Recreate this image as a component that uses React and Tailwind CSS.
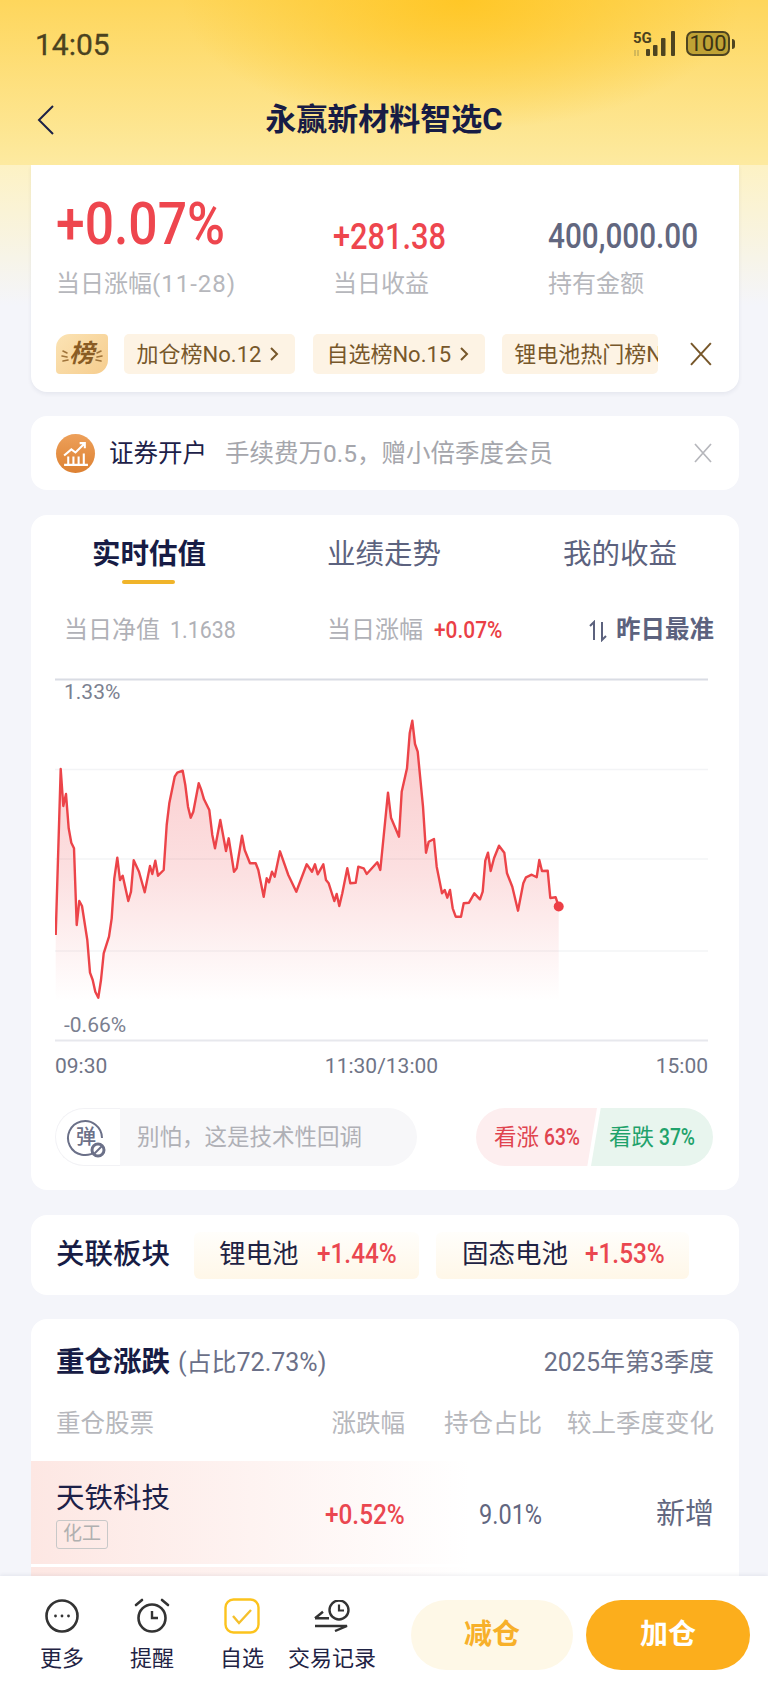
const pts3 = [[47,795],[62,297],[70,408],[78,372],[86,475],[94,518],[102,535],[110,765],[118,693],[126,708],[142,810],[150,908],[158,930],[166,965],[175,983],[183,930],[191,850],[207,800],[215,745],[223,625],[232,563],[240,630],[248,617],[265,693],[273,665],[281,571],[297,605],[314,667],[330,588],[337,612],[346,572],[354,617],[371,600],[380,465],[388,400],[404,320],[412,308],[428,302],[436,345],[444,410],[452,443],[460,425],[476,340],[484,360],[492,388],[508,420],[517,495],[525,535],[541,450],[558,543],[566,505],[582,605],[590,595],[606,497],[614,540],[630,580],[647,580],[655,600],[671,680],[680,625],[687,637],[696,605],[704,620],[720,544],[745,615],[769,665],[800,583],[816,605],[825,583],[833,613],[850,583],[858,630],[866,640],[883,693],[890,672],[898,708],[907,670],[922,595],[931,640],[947,638],[955,590],[971,595],[980,612],[1012,577],[1021,600]];
const pts4 = [[54,368],[63,443],[87,500],[95,365],[111,295],[119,190],[127,152],[135,222],[143,245],[159,410],[168,548],[176,515],[192,507],[200,590],[216,670],[224,660],[232,683],[240,660],[248,715],[257,740],[273,740],[281,700],[297,698],[313,670],[330,688],[338,665],[346,572],[354,548],[362,603],[372,565],[387,527],[403,548],[411,610],[427,650],[444,722],[460,640],[468,622],[485,614],[500,622],[508,570],[516,603],[533,602],[541,684],[557,682],[566,710]];
const line = [
  ...pts3.map(([x, y]) => [40 + x / 3, 670 + y / 3]),
  ...pts4.map(([x, y]) => [370 + x / 3, 670 + y / 3]),
].map(([x, y]) => `${x.toFixed(1)},${y.toFixed(1)}`).join(" ");
const lastX = (370 + 566 / 3).toFixed(1);
const area = `55.7,1001 ${line} ${lastX},1001`;

function Num({ cls, children }) {
  return <span className={`inline-block whitespace-nowrap ${cls}`}>{children}</span>;
}

function Chart() {
  return (
    <div className="relative h-[375px] w-[653px]">
      <svg viewBox="55 670 653 375" className="block h-[375px] w-[653px]">
        <defs>
          <linearGradient id="fillg" x1="0" y1="0" x2="0" y2="1">
            <stop offset="0" stopColor="#ee4b50" stopOpacity="0.3" />
            <stop offset="0.55" stopColor="#ee4b50" stopOpacity="0.17" />
            <stop offset="1" stopColor="#ee4b50" stopOpacity="0" />
          </linearGradient>
        </defs>
        <line x1="55" x2="708" y1="679.5" y2="679.5" stroke="#d9dce4" strokeWidth="2" />
        <line x1="55" x2="708" y1="769.5" y2="769.5" stroke="#f3f4f6" strokeWidth="1.5" />
        <line x1="55" x2="708" y1="859" y2="859" stroke="#f3f4f6" strokeWidth="1.5" />
        <line x1="55" x2="708" y1="951" y2="951" stroke="#f3f4f6" strokeWidth="1.5" />
        <line x1="55" x2="708" y1="1040.5" y2="1040.5" stroke="#e7e8ed" strokeWidth="2" />
        <polygon points={area} fill="url(#fillg)" />
        <polyline points={line} fill="none" stroke="#ec4449" strokeWidth="2.4" strokeLinejoin="round" />
        <circle cx={lastX} cy="906.5" r="5" fill="#ec3f46" />
      </svg>
      <span className="absolute left-[9px] top-[10px] text-[21px] leading-[24px] text-[#7b7f90]">1.33%</span>
      <span className="absolute left-[9px] top-[343px] text-[21px] leading-[24px] text-[#7b7f90]">-0.66%</span>
    </div>
  );
}

function Tag({ children, cls }) {
  return <div className={`flex h-[40px] items-center overflow-hidden rounded-[5px] bg-[#fdf3e4] text-[22px] text-[#77572a] ${cls}`}>{children}</div>;
}

function Chev() {
  return (
    <svg viewBox="0 0 10 16" className="ml-[8px] h-[16px] w-[10px]" fill="none" stroke="#77572a" strokeWidth="2"><path d="M2 2l6 6-6 6" /></svg>
  );
}

function NavIcon({ label, children }) {
  return (
    <div className="flex w-[90px] flex-col items-center">
      <div className="flex h-[44px] w-[44px] items-center justify-center">{children}</div>
      <span className="mt-[6px] text-[22px] leading-[30px] text-[#1f2344]">{label}</span>
    </div>
  );
}

export default function App() {
  return (
    <div className="flex h-[1695px] w-[768px] flex-col overflow-hidden bg-[#f4f5fa] [font-family:Roboto,'Noto_Sans_CJK_SC',sans-serif]">
      <header className="h-[165px] shrink-0 bg-[radial-gradient(ellipse_280px_130px_at_60%_0%,rgba(255,198,36,0.95),rgba(255,198,36,0)),linear-gradient(180deg,#fed65c,#fdeaa0)] px-[35px]">
        <div className="flex h-[100px] items-start justify-between pt-[27px]">
          <span className="text-[30px] leading-[36px] text-[#4b4220] [-webkit-text-stroke:0.3px_#4b4220]">14:05</span>
          <div className="mr-[-2px] mt-[4px] flex items-start">
            <div className="relative h-[26px] w-[46px]">
              <span className="absolute left-0 top-0 text-[15px] font-bold leading-[14px] text-[#4b4220]">5G</span>
              <svg viewBox="0 0 46 26" className="absolute left-0 top-0 h-[26px] w-[46px]" fill="#4e4420">
                <path d="M2 19v6M5 25v-6" stroke="#a99a55" strokeWidth="1" />
                <rect x="13" y="18" width="4" height="7" rx="1" />
                <rect x="20" y="14" width="4.5" height="11" rx="1" />
                <rect x="28" y="7" width="4.5" height="18" rx="1" />
                <rect x="38" y="0" width="4" height="25" rx="1" />
              </svg>
            </div>
            <div className="flex items-center">
              <div className="ml-[7px] flex h-[25px] w-[44px] items-center justify-center rounded-[7px] border-2 border-[#4e4420] bg-[#bfa235] text-[22px] leading-[22px] text-[#3c3414]">100</div>
              <div className="ml-[2px] h-[10px] w-[3px] rounded-r bg-[#4e4420]" />
            </div>
          </div>
        </div>
        <div className="relative flex h-[40px] items-center justify-center">
          <svg viewBox="0 0 18 32" className="absolute left-[2px] top-[4px] h-[32px] w-[18px]" fill="none" stroke="#1c2147" strokeWidth="2"><path d="M16 2L2 16l14 14" /></svg>
          <h1 className="text-[31px] font-bold leading-[40px] text-[#171c45]">永赢新材料智选C</h1>
        </div>
      </header>

      <main className="min-h-0 flex-1 overflow-hidden bg-[linear-gradient(180deg,#fdf2c4_0px,#f4f5fa_140px,#f4f5fa_100%)] pl-[31px] pr-[29px]">
        <section className="rounded-b-[16px] bg-white pb-[17px] pl-[25px] pr-[26px] shadow-[0_2px_4px_rgba(30,40,80,0.07)]">
          <div className="grid grid-cols-[277px_215px_1fr]">
            <div className="pt-[29px]">
              <Num cls="w-[168px] origin-left scale-x-[0.86] text-[60px] font-medium leading-[60px] text-[#ee464e]">+0.07%</Num>
              <div className="mt-[15px] text-[24px] leading-[30px] text-[#b6b7bc]">当日涨幅<span className="tracking-[1px]">(11-28)</span></div>
            </div>
            <div className="pt-[52px]">
              <Num cls="w-[112px] origin-left scale-x-[0.855] text-[36px] font-medium leading-[40px] text-[#ee464e]">+281.38</Num>
              <div className="mt-[12px] text-[24px] leading-[30px] text-[#b6b7bc]">当日收益</div>
            </div>
            <div className="pt-[52px]">
              <Num cls="w-[150px] origin-left scale-x-[0.85] text-[35px] font-medium leading-[40px] text-[#62677f]">400,000.00</Num>
              <div className="mt-[12px] text-[24px] leading-[30px] text-[#b6b7bc]">持有金额</div>
            </div>
          </div>
          <div className="mt-[34px] flex h-[42px] items-center">
            <div className="relative flex h-[40px] w-[52px] items-center justify-center rounded-bl-[4px] rounded-br-[14px] rounded-tl-[14px] rounded-tr-[4px] bg-[linear-gradient(135deg,#fbe3b4,#f6cd8e)]">
              <svg viewBox="0 0 52 40" className="absolute inset-0 h-[40px] w-[52px]" fill="none" stroke="#a0743a" strokeWidth="1.6" strokeLinecap="round">
                <path d="M7 17l4 2M6 22l5 1M7 27l5-1M45 17l-4 2M46 22l-5 1M45 27l-5-1" />
              </svg>
              <span className="relative text-[25px] font-bold italic leading-[30px] text-[#8a5c24]">榜</span>
            </div>
            <Tag cls="ml-[16px] w-[173px] pl-[13px]">加仓榜No.12<Chev /></Tag>
            <Tag cls="ml-[18px] w-[173px] pl-[13px]">自选榜No.15<Chev /></Tag>
            <Tag cls="ml-[17px] w-[157px] whitespace-nowrap pl-[12px]">锂电池热门榜No.3</Tag>
            <svg viewBox="0 0 24 24" className="ml-[31px] h-[24px] w-[24px]" fill="none" stroke="#77572a" strokeWidth="2"><path d="M2 1l20 22M22 1L2 23" /></svg>
          </div>
        </section>

        <section className="mt-[24px] flex h-[74px] items-center rounded-[16px] bg-white pl-[25px] pr-[26px]">
          <div className="flex h-[39px] w-[39px] items-center justify-center rounded-full bg-[linear-gradient(180deg,#eda05a,#dd8132)]">
            <svg viewBox="0 0 28 28" className="h-[29px] w-[29px]" fill="none" stroke="#fff" strokeWidth="2">
              <path d="M3 16l7-6 4 3 9-9M18 4h5v5" />
              <path d="M7 17v7M12 17v7M17 17v7M22 14v10M3 25h23" />
            </svg>
          </div>
          <span className="ml-[14px] pt-[1px] text-[24.5px] leading-[30px] text-[#1d2148]">证券开户</span>
          <span className="ml-[18px] pt-[1px] text-[24.5px] leading-[30px] text-[#a5a6ac]">手续费万0.5，赠小倍季度会员</span>
          <svg viewBox="0 0 20 20" className="ml-auto h-[20px] w-[20px]" fill="none" stroke="#b6b7bc" strokeWidth="1.7"><path d="M2 1l16 18M18 1L2 19" /></svg>
        </section>

        <section className="mt-[25px] h-[675px] rounded-[16px] bg-white px-[24px]">
          <div className="grid h-[75px] grid-cols-[235px_236px_1fr] text-[28.5px] leading-[36px] text-[#5c627e]">
            <div className="relative ml-[37px] w-[116px] pt-[22px] font-bold text-[#171c45]">
              实时估值
              <div className="absolute left-[30px] top-[65px] h-[4px] w-[53px] rounded-full bg-[#f0b42a]" />
            </div>
            <div className="ml-[37px] pt-[22px]">业绩走势</div>
            <div className="ml-[37px] pt-[22px]">我的收益</div>
          </div>
          <div className="relative flex h-[80px] items-start pt-[25px] text-[24px] leading-[30px]">
            <span className="ml-[9px] text-[#b0b1b7]">当日净值</span>
            <Num cls="ml-[10px] w-[65px] origin-left scale-x-[0.89] text-[#b0b1b7]">1.1638</Num>
            <span className="absolute left-[272px] top-[25px] text-[#b0b1b7]">当日涨幅</span>
            <Num cls="absolute left-[379px] top-[25px] origin-left scale-x-[0.87] font-medium text-[#ea3f46]">+0.07%</Num>
            <svg viewBox="0 0 20 22" className="ml-auto mr-[8px] mt-[5px] h-[22px] w-[20px]" fill="none" stroke="#5c627e" strokeWidth="2"><path d="M6 20V2L2 6M14 2v18l4-4" /></svg>
            <span className="mr-[1px] text-[24.5px] font-bold text-[#5c627e]">昨日最准</span>
          </div>
          <Chart />
          <div className="mt-[8px] flex justify-between pr-[7px] text-[21px] leading-[26px] text-[#6f7486]">
            <span>09:30</span>
            <span>11:30/13:00</span>
            <span>15:00</span>
          </div>
          <div className="mt-[29px] flex items-center">
            <div className="flex h-[58px] w-[362px] overflow-hidden rounded-[29px] bg-[#f7f7f9]">
              <div className="relative flex h-[58px] w-[65px] items-center justify-center rounded-l-[29px] border border-r-0 border-[#f2f2f5] bg-white">
                <svg viewBox="0 0 40 40" className="absolute left-[10px] top-[9px] h-[40px] w-[40px]" fill="none" stroke="#6b7088" strokeWidth="2">
                  <path d="M30 33A17 17 0 1 1 36 20" />
                  <circle cx="32" cy="32" r="6" stroke="#6b7088" strokeWidth="3" fill="#fff" />
                  <path d="M28 36l8-8" strokeWidth="2" />
                </svg>
                <span className="relative left-[-2px] text-[20px] font-medium leading-[24px] text-[#6b7088]">弹</span>
              </div>
              <span className="ml-[17px] self-center text-[22.5px] leading-[30px] text-[#afb0b6]">别怕，这是技术性回调</span>
            </div>
            <div className="relative ml-[59px] flex h-[58px] w-[237px] text-[22.5px] leading-[58px]">
              <div className="flex h-[58px] w-[121px] rounded-l-[29px] bg-[#fdeeef] pl-[18px] text-[#e0444f] [clip-path:polygon(0_0,100%_0,92%_100%,0_100%)]">
                看涨<Num cls="ml-[5px] origin-left scale-x-[0.8] text-[24px] font-medium">63%</Num>
              </div>
              <div className="ml-[-6px] flex h-[58px] w-[122px] rounded-r-[29px] bg-[#e8f5ee] pl-[18px] text-[#1fa26b] [clip-path:polygon(8%_0,100%_0,100%_100%,0_100%)]">
                看跌<Num cls="ml-[5px] origin-left scale-x-[0.8] text-[24px] font-medium">37%</Num>
              </div>
            </div>
          </div>
        </section>

        <section className="mt-[25px] flex h-[80px] items-center rounded-[16px] bg-white pl-[25px]">
          <span className="pb-[1px] text-[28.5px] font-medium leading-[36px] text-[#171c45]">关联板块</span>
          <div className="ml-[24px] flex h-[47px] w-[225px] items-center rounded-[6px] bg-[linear-gradient(180deg,#fffefb,#fff7e8)] pb-[2px] pl-[25px] text-[26.5px]">
            <span className="text-[#1f2344]">锂电池</span>
            <Num cls="ml-[18px] w-[79px] origin-left scale-x-[0.87] text-[28px] font-medium text-[#ea4750]">+1.44%</Num>
          </div>
          <div className="ml-[17px] flex h-[47px] w-[253px] items-center rounded-[6px] bg-[linear-gradient(180deg,#fffefb,#fff7e8)] pb-[2px] pl-[26px] text-[26.5px]">
            <span className="text-[#1f2344]">固态电池</span>
            <Num cls="ml-[17px] w-[79px] origin-left scale-x-[0.87] text-[28px] font-medium text-[#ea4750]">+1.53%</Num>
          </div>
        </section>

        <section className="mt-[24px] rounded-t-[16px] bg-white">
          <div className="flex h-[88px] items-center justify-between pl-[25px] pr-[25px]">
            <div className="flex items-center">
              <span className="text-[28.5px] font-bold leading-[36px] text-[#171c45]">重仓涨跌</span>
              <span className="ml-[8px] text-[25px] leading-[36px] text-[#6b7088]">(占比72.73%)</span>
            </div>
            <span className="text-[25px] leading-[36px] text-[#6b7088]">2025年第3季度</span>
          </div>
          <div className="mt-[1px] grid h-[32px] grid-cols-[1fr_137px_172px] pl-[25px] pr-[25px] text-[24.5px] leading-[32px] text-[#b6b7bc]">
            <div className="flex justify-between"><span>重仓股票</span><span>涨跌幅</span></div>
            <span className="text-right">持仓占比</span>
            <span className="text-right">较上季度变化</span>
          </div>
          <div className="mt-[21px] grid h-[103px] grid-cols-[1fr_137px_172px] items-center bg-[linear-gradient(90deg,#fde7e3,#ffffff_62%)] pl-[25px] pr-[25px] pt-[4px]">
            <div className="flex items-center justify-between">
              <div>
                <div className="text-[28.5px] leading-[36px] text-[#1d2148]">天铁科技</div>
                <div className="mt-[3px] flex h-[29px] w-[52px] items-center justify-center rounded-[3px] border border-[#c8c8c8] text-[19px] leading-[24px] text-[#b0b0b0]">化工</div>
              </div>
              <Num cls="w-[80px] origin-left scale-x-[0.87] text-[28px] font-medium text-[#ea4750]">+0.52%</Num>
            </div>
            <Num cls="w-[75px] origin-right justify-self-end scale-x-[0.84] text-right text-[28px] text-[#62677f]">9.01%</Num>
            <span className="text-right text-[29px] text-[#62677f]">新增</span>
          </div>
          <div className="mt-[3px] h-[20px] bg-[linear-gradient(90deg,#fde7e3,#ffffff_62%)]" />
        </section>
      </main>

      <footer className="z-10 flex h-[119px] shrink-0 bg-white pl-[17px] shadow-[0_-1px_4px_rgba(30,40,80,0.08)]">
        <div className="flex pt-[18px]">
          <NavIcon label="更多">
            <svg viewBox="0 0 36 36" className="h-[36px] w-[36px]" fill="none" stroke="#333" strokeWidth="2.6">
              <circle cx="18" cy="18" r="15.5" />
              <circle cx="11.5" cy="18" r="1.4" fill="#333" stroke="none" />
              <circle cx="18" cy="18" r="1.4" fill="#333" stroke="none" />
              <circle cx="24.5" cy="18" r="1.4" fill="#333" stroke="none" />
            </svg>
          </NavIcon>
          <NavIcon label="提醒">
            <svg viewBox="0 0 36 36" className="h-[36px] w-[36px]" fill="none" stroke="#333" strokeWidth="2.6">
              <circle cx="18" cy="20" r="13.5" />
              <path d="M18 13v7h6" strokeWidth="2.4" />
              <path d="M2 7l6-5M34 7l-6-5" strokeLinecap="round" />
            </svg>
          </NavIcon>
          <NavIcon label="自选">
            <svg viewBox="0 0 36 36" className="h-[36px] w-[36px]" fill="none" stroke="#fcc31d" strokeWidth="2.4">
              <rect x="1.5" y="1.5" width="33" height="33" rx="8" />
              <path d="M9 18l6 7 12-13" stroke="#f5c02c" />
            </svg>
          </NavIcon>
          <NavIcon label="交易记录">
            <svg viewBox="0 0 36 32" className="h-[32px] w-[36px]" fill="none" stroke="#333" strokeWidth="2.4">
              <circle cx="25" cy="10" r="9.5" />
              <path d="M25 4.5V10.5h5" strokeWidth="2.2" />
              <path d="M1 18.3h14M1 18.3l8-6.5M1 26h32l-12 5" />
            </svg>
          </NavIcon>
        </div>
        <div className="ml-[34px] flex pt-[24px]">
          <button className="h-[70px] w-[162px] rounded-[35px] bg-[#fef8e7] text-[28px] font-bold text-[#f7b02a]">减仓</button>
          <button className="ml-[13px] h-[70px] w-[164px] rounded-[35px] bg-[#fcae1c] text-[28px] font-bold text-white">加仓</button>
        </div>
      </footer>
    </div>
  );
}
